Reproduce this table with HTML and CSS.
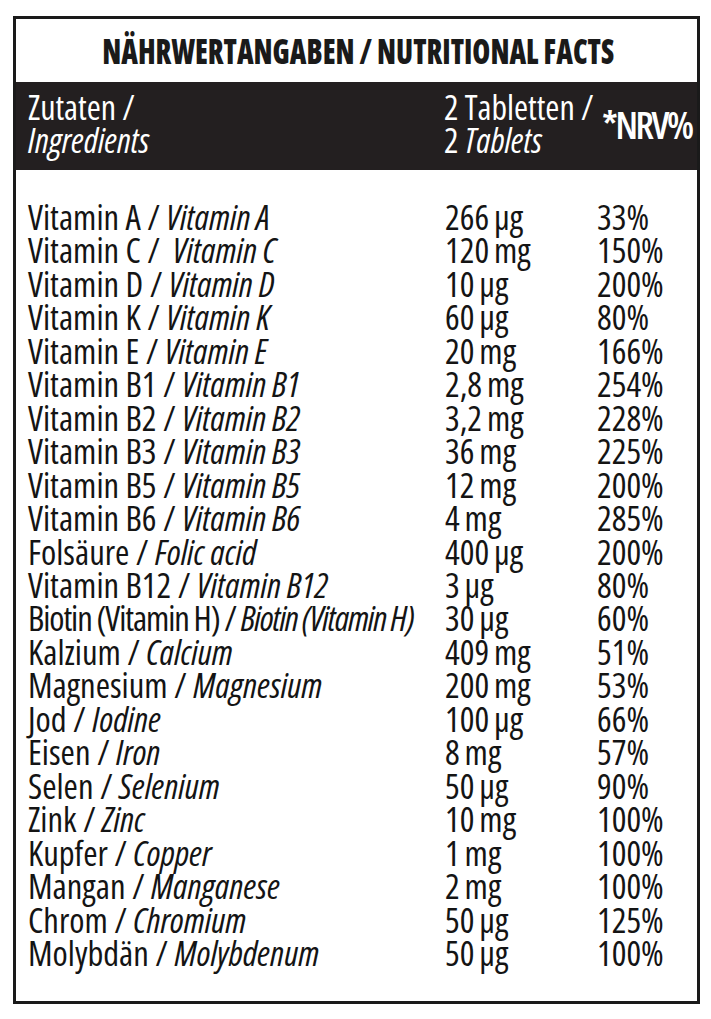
FILE: index.html
```html
<!DOCTYPE html>
<html lang="de">
<head>
<meta charset="utf-8">
<title>Nährwertangaben / Nutritional Facts</title>
<link rel="stylesheet" href="styles.css">
</head>
<body>
<div class="panel">
  <h1 class="title"><span class="title-text">NÄHRWERTANGABEN / NUTRITIONAL FACTS</span></h1>
  <div class="head">
    <div class="hcell">Zutaten /<br><i>Ingredients</i></div>
    <div class="hcell">2 Tabletten /<br>2 <i>Tablets</i></div>
    <div class="hcell nrv">*NRV%</div>
  </div>
  <div class="rows">
    <div class="row"><span>Vitamin A / <i>Vitamin A</i></span><span class="val">266 µg</span><span>33%</span></div>
    <div class="row"><span>Vitamin C / &nbsp;<i>Vitamin C</i></span><span class="val">120 mg</span><span>150%</span></div>
    <div class="row"><span>Vitamin D / <i>Vitamin D</i></span><span class="val">10 µg</span><span>200%</span></div>
    <div class="row"><span>Vitamin K / <i>Vitamin K</i></span><span class="val">60 µg</span><span>80%</span></div>
    <div class="row"><span>Vitamin E / <i>Vitamin E</i></span><span class="val">20 mg</span><span>166%</span></div>
    <div class="row"><span>Vitamin B1 / <i>Vitamin B1</i></span><span class="val">2,8 mg</span><span>254%</span></div>
    <div class="row"><span>Vitamin B2 / <i>Vitamin B2</i></span><span class="val">3,2 mg</span><span>228%</span></div>
    <div class="row"><span>Vitamin B3 / <i>Vitamin B3</i></span><span class="val">36 mg</span><span>225%</span></div>
    <div class="row"><span>Vitamin B5 / <i>Vitamin B5</i></span><span class="val">12 mg</span><span>200%</span></div>
    <div class="row"><span>Vitamin B6 / <i>Vitamin B6</i></span><span class="val">4 mg</span><span>285%</span></div>
    <div class="row"><span>Folsäure / <i>Folic acid</i></span><span class="val">400 µg</span><span>200%</span></div>
    <div class="row"><span>Vitamin B12 / <i>Vitamin B12</i></span><span class="val">3 µg</span><span>80%</span></div>
    <div class="row"><span class="tight">Biotin (Vitamin H) / <i>Biotin (Vitamin H)</i></span><span class="val">30 µg</span><span>60%</span></div>
    <div class="row"><span>Kalzium / <i>Calcium</i></span><span class="val">409 mg</span><span>51%</span></div>
    <div class="row"><span>Magnesium / <i>Magnesium</i></span><span class="val">200 mg</span><span>53%</span></div>
    <div class="row"><span>Jod / <i>Iodine</i></span><span class="val">100 µg</span><span>66%</span></div>
    <div class="row"><span>Eisen / <i>Iron</i></span><span class="val">8 mg</span><span>57%</span></div>
    <div class="row"><span>Selen / <i>Selenium</i></span><span class="val">50 µg</span><span>90%</span></div>
    <div class="row"><span>Zink / <i>Zinc</i></span><span class="val">10 mg</span><span>100%</span></div>
    <div class="row"><span>Kupfer / <i>Copper</i></span><span class="val">1 mg</span><span>100%</span></div>
    <div class="row"><span>Mangan / <i>Manganese</i></span><span class="val">2 mg</span><span>100%</span></div>
    <div class="row"><span>Chrom / <i>Chromium</i></span><span class="val">50 µg</span><span>125%</span></div>
    <div class="row"><span>Molybdän / <i>Molybdenum</i></span><span class="val">50 µg</span><span>100%</span></div>
  </div>
</div>
</body>
</html>
```
FILE: styles.css
```css
html, body {
  margin: 0;
  padding: 0;
  background: #ffffff;
}

body {
  font-family: "Open Sans", "Liberation Sans", sans-serif;
  font-stretch: 75%;
  color: #141414;
}

.panel {
  box-sizing: border-box;
  width: 687px;
  height: 988px;
  margin: 16px 0 0 13px;
  border: 3px solid #1a1a1a;
  display: flex;
  flex-direction: column;
}

.title {
  margin: 0;
  height: 63px;
  display: flex;
  align-items: center;
  justify-content: center;
  font-size: 36px;
  font-weight: 800;
  font-stretch: 75%;
  color: #1a1a1a;
  line-height: 1;
}

.title-text {
  display: inline-block;
  transform: scaleX(0.806);
  transform-origin: center;
  white-space: nowrap;
  padding-left: 4px;
}

.head {
  height: 88px;
  box-sizing: border-box;
  background: #231f20;
  color: #ffffff;
  display: grid;
  grid-template-columns: 416px 158px 1fr;
  padding: 9px 0 0 12px;
  font-size: 34px;
  line-height: 33px;
}

.hcell {
  white-space: nowrap;
}

.nrv {
  font-size: 38px;
  font-weight: 600;
  letter-spacing: -2.4px;
  line-height: 1.2;
  align-self: center;
  margin-top: -12px;
}

.rows {
  padding: 30px 0 0 12px;
  font-size: 34.6px;
  line-height: 33.45px;
}

.row {
  display: grid;
  grid-template-columns: 417px 152px 1fr;
  white-space: nowrap;
}

.val {
  word-spacing: -1.5px;
}

.tight {
  letter-spacing: -1.1px;
  word-spacing: -0.5px;
}
```
